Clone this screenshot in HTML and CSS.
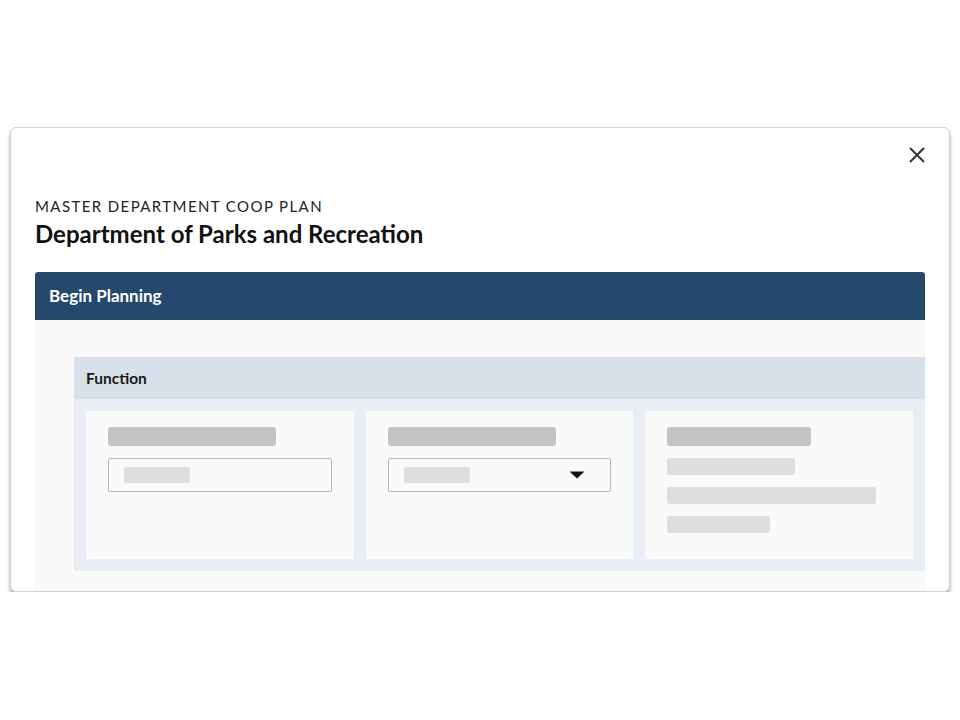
FILE: index.html
```html
<!DOCTYPE html>
<html lang="en">
<head>
<meta charset="utf-8">
<title>Department of Parks and Recreation</title>
<link rel="stylesheet" href="styles.css">
</head>
<body>
<div class="modal">
  <div class="modal-top">
    <button class="close" aria-label="Close">
      <svg width="18" height="18" viewBox="0 0 18 18"><path d="M2 2 L16 16 M16 2 L2 16" stroke="#333" stroke-width="2" fill="none"/></svg>
    </button>
  </div>
  <div class="eyebrow">MASTER DEPARTMENT COOP PLAN</div>
  <h1 class="title">Department of Parks and Recreation</h1>
  <div class="panel">
    <div class="panel-head">Begin Planning</div>
    <div class="panel-body">
      <div class="section">
        <div class="section-head">Function</div>
        <div class="section-grid">
          <div class="card">
            <div class="bar label w168"></div>
            <div class="input"><div class="bar ph"></div></div>
          </div>
          <div class="card">
            <div class="bar label w168"></div>
            <div class="input select"><div class="bar ph"></div>
              <svg class="caret" width="16" height="8" viewBox="0 0 16 8"><path d="M0.5 0.5 L15.5 0.5 L8 7.5 Z" fill="#111"/></svg>
            </div>
          </div>
          <div class="card">
            <div class="bar label w144"></div>
            <div class="lines">
              <div class="bar line w128"></div>
              <div class="bar line w209"></div>
              <div class="bar line w103"></div>
            </div>
          </div>
        </div>
      </div>
    </div>
  </div>
</div>
</body>
</html>
```
FILE: styles.css
```css
html, body {
  margin: 0;
  padding: 0;
  background: #ffffff;
  font-family: Lato, "Open Sans", "Liberation Sans", sans-serif;
}
.modal {
  box-sizing: border-box;
  margin: 127px 0 0 10px;
  width: 940px;
  height: 465px;
  padding: 18px 24px 0 24px;
  border: 1px solid #d2d2d2;
  border-radius: 6px;
  background: #ffffff;
  box-shadow: 0 4px 4px rgba(0, 0, 0, 0.32);
  overflow: hidden;
}
.modal-top {
  height: 51px;
  display: flex;
  justify-content: flex-end;
  align-items: flex-start;
}
.close {
  border: 0;
  background: none;
  padding: 0;
  margin: 0 -1px 0 0;
  width: 18px;
  height: 18px;
  display: block;
  cursor: pointer;
}
.close svg { display: block; }
.eyebrow {
  font-size: 15px;
  line-height: 18px;
  letter-spacing: 1.4px;
  color: #222;
}
.title {
  margin: 4px 0 23px 0;
  font-size: 24px;
  line-height: 30px;
  font-weight: 700;
  color: #111;
}
.panel {
  border-radius: 3px 3px 0 0;
  overflow: hidden;
}
.panel-head {
  height: 48px;
  background: #25496d;
  color: #ffffff;
  font-size: 17px;
  font-weight: 700;
  line-height: 48px;
  padding-left: 14px;
}
.panel-body {
  background: #f9f9f9;
  padding: 37px 0 40px 39px;
}
.section-head {
  height: 42px;
  background: #d8e1ea;
  padding-left: 12px;
  font-size: 15.5px;
  font-weight: 700;
  line-height: 42px;
  color: #1a1a1a;
}
.section-grid {
  background: #e8eef4;
  padding: 12px;
  display: grid;
  grid-template-columns: repeat(3, 1fr);
  gap: 12px;
}
.card {
  background: #fafafa;
  height: 148px;
  box-sizing: border-box;
  padding: 16px 22px;
}
.bar { border-radius: 3px; }
.label {
  height: 19px;
  background: #c4c4c4;
}
.w168 { width: 168px; }
.w144 { width: 144px; }
.w128 { width: 128px; }
.w209 { width: 209px; }
.w103 { width: 103px; }
.input {
  margin-top: 12px;
  height: 34px;
  box-sizing: border-box;
  border: 1px solid #b8b8b8;
  border-radius: 2px;
  background: #fafafa;
  display: flex;
  align-items: center;
  padding: 0 25px 0 15px;
  justify-content: space-between;
}
.ph {
  width: 66px;
  height: 16px;
  background: #dedede;
  border-radius: 2px;
}
.caret { display: block; }
.lines {
  margin-top: 12px;
  display: flex;
  flex-direction: column;
  gap: 12px;
}
.line {
  height: 17px;
  background: #dedede;
}
```
